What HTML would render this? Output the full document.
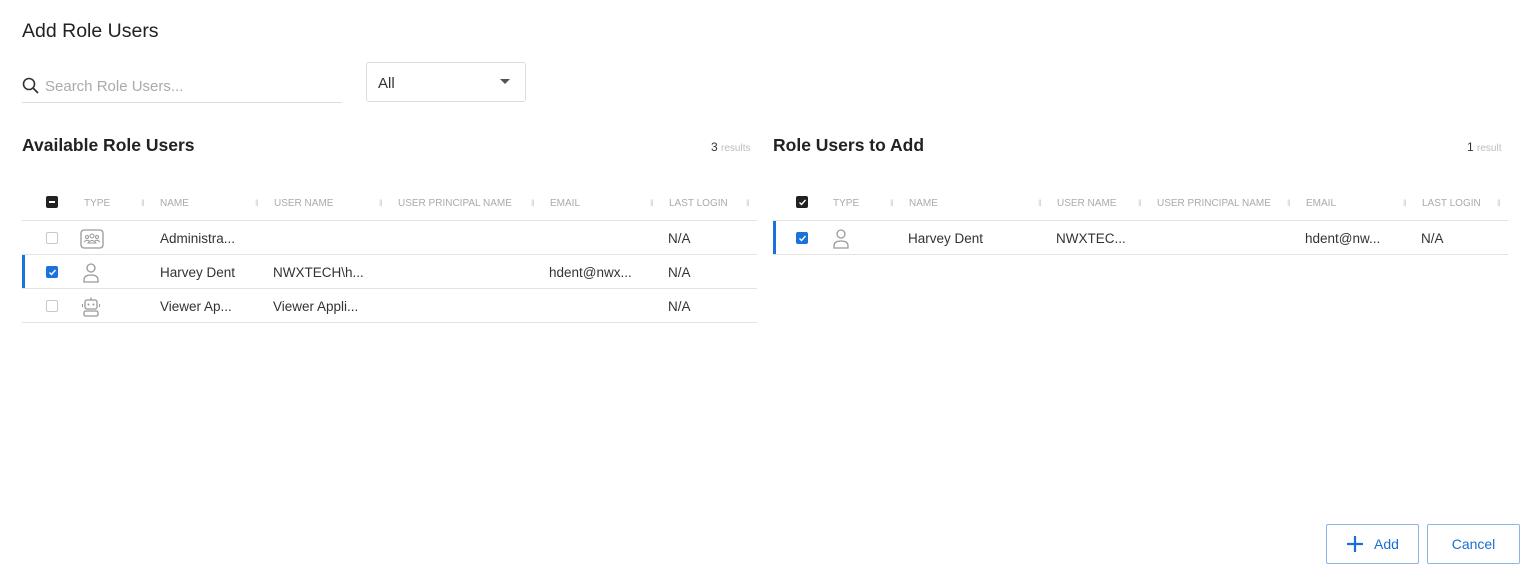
<!DOCTYPE html>
<html><head><style>
*{box-sizing:border-box;margin:0;padding:0}
body{width:1530px;height:578px;background:#fff;font-family:"Liberation Sans",sans-serif;color:#333;position:relative;overflow:hidden}
.a{position:absolute;white-space:nowrap}
.h{font-size:10px;color:#aaa;top:198px}
.sep{font-size:9px;color:#ccc;top:198px}
.t{font-size:13.5px;color:#333}
.line{position:absolute;height:1px;background:#e3e3e3}
.cb{position:absolute;width:12px;height:12px;border:1px solid #c8c8c8;border-radius:2px;background:#fff}
.cbc{background:#1a73d9;border-color:#1a73d9}
.cbd{background:#222;border-color:#222}
.btn{position:absolute;top:524px;height:40px;border:1px solid #8ab6ea;border-radius:2px;color:#1a6fd1;font-size:14px;display:flex;align-items:center;justify-content:center}
</style></head><body>
<div class="a" style="left:22px;top:20px;font-size:19.5px;color:#222">Add Role Users</div>
<svg class="a" style="left:22px;top:77px" width="18" height="18" viewBox="0 0 18 18"><circle cx="7" cy="7" r="5.5" fill="none" stroke="#333" stroke-width="1.6"/><line x1="11" y1="11" x2="16" y2="16" stroke="#333" stroke-width="1.8"/></svg>
<div class="a" style="left:45px;top:78px;font-size:15px;color:#aaa">Search Role Users...</div>
<div class="line" style="left:22px;top:102px;width:320px;background:#ddd"></div>
<div class="a" style="left:366px;top:62px;width:160px;height:40px;border:1px solid #ddd;border-radius:3px"></div>
<div class="a" style="left:378px;top:75px;font-size:15px;color:#333">All</div>
<div class="a" style="left:500px;top:79px;width:0;height:0;border-left:5px solid transparent;border-right:5px solid transparent;border-top:5px solid #555"></div>

<div class="a" style="left:22px;top:135px;font-size:17.5px;font-weight:bold;color:#222">Available Role Users</div>
<div class="a" style="left:711px;top:140px;font-size:12px;color:#333">3 <span style="font-size:10px;color:#bbb">results</span></div>
<div class="a" style="left:773px;top:135px;font-size:17.5px;font-weight:bold;color:#222">Role Users to Add</div>
<div class="a" style="left:1467px;top:140px;font-size:12px;color:#333">1 <span style="font-size:10px;color:#bbb">result</span></div>

<!-- left table -->
<div class="cb cbd" style="left:46px;top:196px"><div style="position:absolute;left:2px;top:4px;width:6px;height:2px;background:#fff"></div></div>
<div class="a h" style="left:84px">TYPE</div><div class="a sep" style="left:141px">ǁ</div>
<div class="a h" style="left:160px">NAME</div><div class="a sep" style="left:255px">ǁ</div>
<div class="a h" style="left:274px">USER NAME</div><div class="a sep" style="left:379px">ǁ</div>
<div class="a h" style="left:398px">USER PRINCIPAL NAME</div><div class="a sep" style="left:531px">ǁ</div>
<div class="a h" style="left:550px">EMAIL</div><div class="a sep" style="left:650px">ǁ</div>
<div class="a h" style="left:669px">LAST LOGIN</div><div class="a sep" style="left:746px">ǁ</div>
<div class="line" style="left:22px;top:220px;width:735px"></div>
<div class="line" style="left:22px;top:254px;width:735px"></div>
<div class="line" style="left:22px;top:288px;width:735px"></div>
<div class="line" style="left:22px;top:322px;width:735px"></div>
<div class="a" style="left:22px;top:255px;width:3px;height:33px;background:#1a73d9"></div>

<div class="cb" style="left:46px;top:232px"></div>
<svg class="a" style="left:80px;top:229px" width="24" height="20" viewBox="0 0 24 20"><rect x="1" y="1" width="22" height="18" rx="3" fill="none" stroke="#999" stroke-width="1.3"/><circle cx="12" cy="7" r="2" fill="none" stroke="#999"/><circle cx="7" cy="8" r="1.5" fill="none" stroke="#999"/><circle cx="17" cy="8" r="1.5" fill="none" stroke="#999"/><path d="M8 14q4-5 8 0z M4 13q3-3 5-1 M20 13q-3-3-5-1" fill="none" stroke="#999"/></svg>
<div class="a t" style="left:160px;top:231px">Administra...</div>
<div class="a t" style="left:668px;top:231px">N/A</div>

<div class="cb cbc" style="left:46px;top:266px"><svg style="position:absolute;left:1px;top:1px" width="9" height="9"><path d="M1.5 4.5l2 2 4-4.5" fill="none" stroke="#fff" stroke-width="1.4"/></svg></div>
<svg class="a" style="left:82px;top:263px" width="18" height="20" viewBox="0 0 18 20"><circle cx="9" cy="5" r="4" fill="none" stroke="#999" stroke-width="1.3"/><path d="M2 19v-2q0-5 7-5t7 5v2z" fill="none" stroke="#999" stroke-width="1.3"/></svg>
<div class="a t" style="left:160px;top:265px">Harvey Dent</div>
<div class="a t" style="left:273px;top:265px">NWXTECH\h...</div>
<div class="a t" style="left:549px;top:265px">hdent@nwx...</div>
<div class="a t" style="left:668px;top:265px">N/A</div>

<div class="cb" style="left:46px;top:300px"></div>
<svg class="a" style="left:82px;top:297px" width="18" height="20" viewBox="0 0 18 20"><line x1="9" y1="0.5" x2="9" y2="3" stroke="#999" stroke-width="1.3"/><rect x="3" y="3" width="12" height="9" rx="2" fill="none" stroke="#999" stroke-width="1.3"/><circle cx="6.5" cy="7.5" r="1" fill="#999"/><circle cx="11.5" cy="7.5" r="1" fill="#999"/><rect x="2" y="14" width="14" height="5" rx="1.5" fill="none" stroke="#999" stroke-width="1.3"/><line x1="0.5" y1="7" x2="0.5" y2="10" stroke="#999"/><line x1="17.5" y1="7" x2="17.5" y2="10" stroke="#999"/></svg>
<div class="a t" style="left:160px;top:299px">Viewer Ap...</div>
<div class="a t" style="left:273px;top:299px">Viewer Appli...</div>
<div class="a t" style="left:668px;top:299px">N/A</div>

<!-- right table -->
<div class="cb cbd" style="left:796px;top:196px"><svg style="position:absolute;left:1px;top:1px" width="9" height="9"><path d="M1.5 4.5l2 2 4-4.5" fill="none" stroke="#fff" stroke-width="1.4"/></svg></div>
<div class="a h" style="left:833px">TYPE</div><div class="a sep" style="left:890px">ǁ</div>
<div class="a h" style="left:909px">NAME</div><div class="a sep" style="left:1038px">ǁ</div>
<div class="a h" style="left:1057px">USER NAME</div><div class="a sep" style="left:1138px">ǁ</div>
<div class="a h" style="left:1157px">USER PRINCIPAL NAME</div><div class="a sep" style="left:1287px">ǁ</div>
<div class="a h" style="left:1306px">EMAIL</div><div class="a sep" style="left:1403px">ǁ</div>
<div class="a h" style="left:1422px">LAST LOGIN</div><div class="a sep" style="left:1497px">ǁ</div>
<div class="line" style="left:773px;top:220px;width:735px"></div>
<div class="line" style="left:773px;top:254px;width:735px"></div>
<div class="a" style="left:773px;top:221px;width:3px;height:33px;background:#1a73d9"></div>
<div class="cb cbc" style="left:796px;top:232px"><svg style="position:absolute;left:1px;top:1px" width="9" height="9"><path d="M1.5 4.5l2 2 4-4.5" fill="none" stroke="#fff" stroke-width="1.4"/></svg></div>
<svg class="a" style="left:832px;top:229px" width="18" height="20" viewBox="0 0 18 20"><circle cx="9" cy="5" r="4" fill="none" stroke="#999" stroke-width="1.3"/><path d="M2 19v-2q0-5 7-5t7 5v2z" fill="none" stroke="#999" stroke-width="1.3"/></svg>
<div class="a t" style="left:908px;top:231px">Harvey Dent</div>
<div class="a t" style="left:1056px;top:231px">NWXTEC...</div>
<div class="a t" style="left:1305px;top:231px">hdent@nw...</div>
<div class="a t" style="left:1421px;top:231px">N/A</div>

<div class="btn" style="left:1326px;width:93px"><svg width="18" height="18" style="margin-right:10px"><path d="M9 1v16M1 9h16" stroke="#1a6fd1" stroke-width="2.2"/></svg>Add</div>
<div class="btn" style="left:1427px;width:93px">Cancel</div>
</body></html>
